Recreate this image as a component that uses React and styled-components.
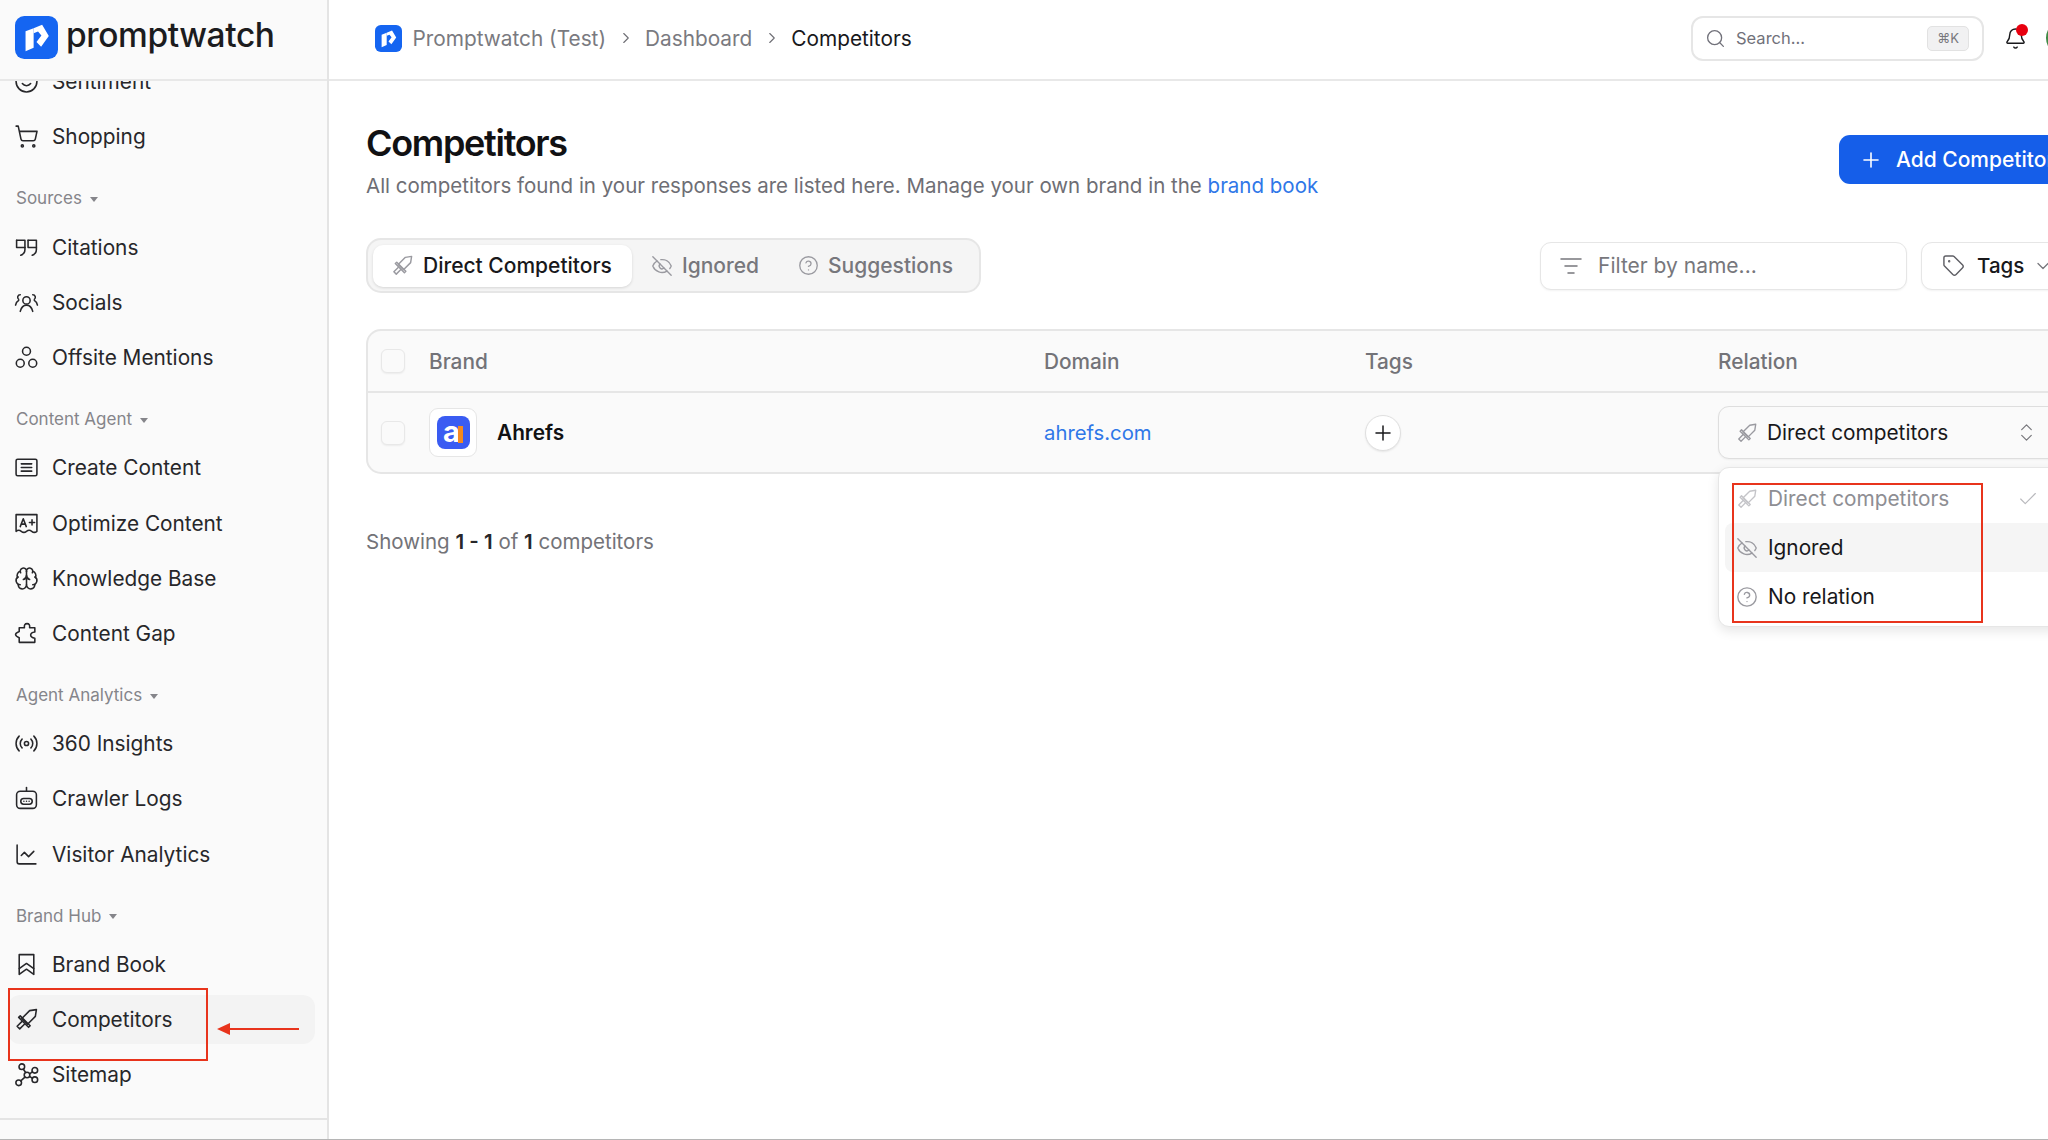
import React from "react";
import styled, { createGlobalStyle } from "styled-components";
import {
  Bell,
  Brain,
  ChartLine,
  Check,
  ChevronDown,
  ChevronRight,
  ChevronsUpDown,
  CircleHelp,
  EyeOff,
  ListFilter,
  Plus,
  Radio,
  Search,
  ShoppingCart,
  Smile,
  Tag,
} from "lucide-react";

const GlobalStyle = createGlobalStyle`
  html, body {
    margin: 0;
    padding: 0;
    background: #fff;
  }
  body {
    font-family: Inter, "Liberation Sans", sans-serif;
    color: #18181b;
    overflow: hidden;
  }
  * {
    box-sizing: border-box;
  }
`;

const Shell = styled.div`
  display: flex;
  width: 2048px;
  height: 1140px;
  overflow: hidden;
  border-bottom: 1px solid #b5b5b5;
`;

/* sidebar */
const Sidebar = styled.aside`
  flex: none;
  display: flex;
  flex-direction: column;
  width: 329px;
  background: #fafafa;
  border-right: 2px solid #e4e4e4;
`;
const BrandBar = styled.div`
  position: relative;
  z-index: 2;
  flex: none;
  display: flex;
  align-items: center;
  gap: 8px;
  height: 81px;
  padding: 0 0 5px 15px;
  background: #fafafa;
  border-bottom: 2px solid #e8e8e8;
`;
const Wordmark = styled.span`
  font-size: 33.5px;
  font-weight: 500;
  letter-spacing: -0.4px;
  color: #1c1c1e;
  position: relative;
  top: -2px;
`;
const NavClip = styled.div`
  flex: 1;
  overflow: hidden;
`;
const Nav = styled.nav`
  margin-top: -24px;
  padding: 0 12px 0 8px;
`;
const NavRow = styled.a`
  position: relative;
  display: flex;
  align-items: center;
  gap: 13px;
  height: 49px;
  margin-bottom: 6.2px;
  padding-left: 6px;
  border-radius: 12px;
  font-size: 20.8px;
  color: #27272a;
  background: ${(p) => (p.$active ? "#f3f3f3" : "transparent")};
  > svg:first-child {
    flex: none;
    width: 25px;
    height: 25px;
    stroke-width: 1.5;
  }
`;
const NavLabel = styled.div`
  display: flex;
  align-items: center;
  gap: 8px;
  height: 24px;
  margin: 25.2px 0 12.2px 8px;
  font-size: 17px;
  color: #85858a;
  &::after {
    content: "";
    border-left: 4.5px solid transparent;
    border-right: 4.5px solid transparent;
    border-top: 5px solid #85858a;
    margin-top: 2px;
  }
`;
const SideFoot = styled.div`
  flex: none;
  height: 21px;
  border-top: 2px solid #e4e4e4;
`;
const MarkBox = styled.div`
  position: absolute;
  left: ${(p) => p.$left}px;
  top: ${(p) => p.$top}px;
  width: ${(p) => p.$w}px;
  height: ${(p) => p.$h}px;
  border: 2px solid #e8341c;
  pointer-events: none;
`;
const MarkArrow = styled.svg`
  position: absolute;
  left: 209px;
  top: 27px;
  width: 84px;
  height: 14px;
`;

/* main */
const Main = styled.main`
  flex: none;
  width: 1755px;
`;
const TopBar = styled.header`
  display: flex;
  align-items: center;
  height: 81px;
  padding: 0 2px 3px 46px;
  border-bottom: 2px solid #e8e8e8;
`;
const Crumbs = styled.div`
  display: flex;
  align-items: center;
  gap: 10.5px;
  font-size: 20.8px;
  color: #7a7a80;
  svg {
    color: #6f6f75;
  }
`;
const CrumbCurrent = styled.span`
  color: #18181b;
`;
const TopRight = styled.div`
  display: flex;
  align-items: center;
  margin-left: auto;
`;
const SearchBox = styled.div`
  display: flex;
  align-items: center;
  width: 293px;
  height: 45px;
  padding: 0 13px 0 12px;
  border: 2px solid #e6e6e6;
  border-radius: 12px;
  font-size: 16.5px;
  color: #71717a;
  svg {
    margin-right: 10px;
  }
`;
const Kbd = styled.kbd`
  margin-left: auto;
  display: flex;
  align-items: center;
  justify-content: center;
  width: 42px;
  height: 25px;
  background: #f1f1f2;
  border: 1px solid #e2e2e2;
  border-radius: 5px;
  font-family: Inter, "DejaVu Sans", sans-serif;
  font-size: 13px;
  color: #77777c;
`;
const BellWrap = styled.div`
  position: relative;
  display: flex;
  margin: 0 19px 0 20px;
  svg {
    width: 23px;
    height: 23px;
  }
  &::after {
    content: "";
    position: absolute;
    top: -3px;
    right: -1px;
    width: 12px;
    height: 12px;
    border-radius: 50%;
    background: #e8000f;
  }
`;
const Avatar = styled.div`
  width: 36px;
  height: 36px;
  border-radius: 50%;
  background: #eef5ee;
  border: 2px solid #3f8a45;
`;
const Content = styled.div`
  padding: 40px 0 0 37px;
`;
const TitleRow = styled.div`
  display: flex;
  align-items: flex-start;
  justify-content: space-between;
  margin-bottom: 37px;
`;
const Title = styled.h1`
  margin: 0 0 6px;
  font-size: 36px;
  line-height: 44px;
  font-weight: 600;
  letter-spacing: -1.3px;
  color: #111113;
`;
const Sub = styled.p`
  margin: 0;
  font-size: 20.5px;
  line-height: 30px;
  color: #6e6e74;
`;
const BlueLink = styled.a`
  color: #2f77e8;
`;
const PrimaryButton = styled.button`
  display: flex;
  align-items: center;
  gap: 13px;
  width: 245px;
  height: 49px;
  margin-top: 14px;
  padding: 0 0 0 20px;
  border: 0;
  border-radius: 11px;
  background: #155ee9;
  color: #fff;
  font-family: inherit;
  font-size: 21px;
  font-weight: 500;
`;
const Toolbar = styled.div`
  display: flex;
  align-items: center;
  margin-bottom: 36px;
`;
const Tabs = styled.div`
  display: flex;
  align-items: center;
  width: 615px;
  height: 55px;
  padding: 0 5px;
  background: #f5f5f5;
  border: 2px solid #e6e6e6;
  border-radius: 15px;
`;
const TabItem = styled.div`
  display: flex;
  align-items: center;
  gap: 9px;
  height: 42px;
  padding: ${(p) => p.$pad};
  border-radius: 10px;
  font-size: 21px;
  font-weight: 500;
  color: ${(p) => (p.$active ? "#18181b" : "#77777c")};
  background: ${(p) => (p.$active ? "#fff" : "transparent")};
  box-shadow: ${(p) => (p.$active ? "0 1px 3px rgba(0,0,0,.13)" : "none")};
  svg {
    color: #9a9aa0;
  }
`;
const FilterBox = styled.div`
  display: flex;
  align-items: center;
  gap: 15px;
  width: 367px;
  height: 48px;
  margin-left: auto;
  padding: 0 18px;
  background: #fff;
  border: 1.5px solid #e6e6e6;
  border-radius: 11px;
  box-shadow: 0 1px 2px rgba(0,0,0,.05);
  font-size: 21px;
  color: #77777c;
`;
const TagsButton = styled.div`
  display: flex;
  align-items: center;
  gap: 12px;
  width: 163px;
  height: 48px;
  margin-left: 14px;
  padding: 0 20px;
  background: #fff;
  border: 1.5px solid #e6e6e6;
  border-radius: 11px;
  box-shadow: 0 1px 2px rgba(0,0,0,.05);
  font-size: 20.5px;
  font-weight: 500;
  color: #18181b;
  > svg:first-child {
    color: #5f5f65;
  }
  > svg:last-child {
    flex: none;
    margin-left: -3px;
    color: #77777c;
  }
`;
const Table = styled.div`
  background: #fafafa;
  border: 2px solid #e6e6e6;
  border-radius: 15px;
`;
const GridRow = styled.div`
  display: grid;
  grid-template-columns: 48px 615px 321px 353px 1fr;
  align-items: center;
  height: ${(p) => p.$h}px;
  padding-left: 13px;
  border-bottom: ${(p) => (p.$head ? "2px solid #e6e6e6" : "0")};
`;
const HeadCell = styled.div`
  font-size: 20.8px;
  font-weight: 500;
  color: #737378;
`;
const CheckBox = styled.div`
  width: 24px;
  height: 24px;
  background: #fafafa;
  border: 1.5px solid #e8e8e8;
  border-radius: 6px;
  box-shadow: 0 1px 2px rgba(0,0,0,.06);
`;
const BrandCell = styled.div`
  display: flex;
  align-items: center;
  gap: 20px;
  font-size: 20.8px;
  font-weight: 600;
  color: #111113;
`;
const LogoFrame = styled.div`
  display: flex;
  align-items: center;
  justify-content: center;
  width: 48px;
  height: 49px;
  background: #fff;
  border: 1.5px solid #e6e6e6;
  border-radius: 9px;
`;
const AhrefsMark = styled.div`
  position: relative;
  display: flex;
  justify-content: center;
  align-items: center;
  width: 33px;
  height: 33px;
  padding-right: 3px;
  background: #3a5cf2;
  border-radius: 8px;
  color: #fff;
  font-size: 29px;
  line-height: 1;
  font-weight: 700;
  &::after {
    content: "";
    position: absolute;
    right: 7px;
    top: 10px;
    width: 5px;
    height: 17px;
    background: #f58a1f;
  }
`;
const AhrefsLetter = styled.span`
  position: relative;
  top: -1px;
`;
const DomainLink = styled.a`
  font-size: 20.3px;
  color: #2f77e8;
`;
const RoundAdd = styled.div`
  display: flex;
  align-items: center;
  justify-content: center;
  width: 36px;
  height: 36px;
  background: #fff;
  border: 1.5px solid #e0e0e0;
  border-radius: 50%;
  box-shadow: 0 1px 2px rgba(0,0,0,.08);
`;
const SelectCell = styled.div`
  position: relative;
  width: 345px;
`;
const SelectBox = styled.div`
  display: flex;
  align-items: center;
  gap: 9px;
  height: 53px;
  padding: 0 24px 0 17px;
  background: #fafafa;
  border: 1.5px solid #dedede;
  border-radius: 11px;
  box-shadow: 0 1px 2px rgba(0,0,0,.05);
  font-size: 20.8px;
  color: #18181b;
  > svg:first-child {
    color: #9a9aa0;
  }
`;
const TrailingIcon = styled.span`
  display: flex;
  margin-left: auto;
  color: ${(p) => p.$color};
`;
const Menu = styled.div`
  position: absolute;
  left: 0;
  right: 0;
  top: calc(100% + 8px);
  height: 160px;
  padding: 6px 6px;
  background: #fff;
  border: 1.5px solid #e6e6e6;
  border-radius: 11px;
  box-shadow: 0 4px 12px rgba(0,0,0,.1);
  z-index: 3;
`;
const MenuItem = styled.div`
  display: flex;
  align-items: center;
  gap: 10px;
  height: 49px;
  padding: 0 17px 0 11px;
  border-radius: 8px;
  font-size: 20.8px;
  color: ${(p) => (p.$muted ? "#8e8e93" : "#18181b")};
  background: ${(p) => (p.$hover ? "#f5f5f5" : "transparent")};
  > svg:first-child {
    color: ${(p) => (p.$muted ? "#c4c4c8" : "#9a9aa0")};
  }
`;
const Showing = styled.p`
  margin: 53px 0 0;
  font-size: 20.5px;
  line-height: 30px;
  color: #737378;
  b {
    font-weight: 600;
    color: #27272a;
  }
`;

/* small drawings that lucide has no match for */
const Stroke = ({ children, size = 22, sw = 1.5, ...rest }) => (
  <svg width={size} height={size} viewBox="0 0 24 24" fill="none" stroke="currentColor" strokeWidth={sw} strokeLinecap="round" strokeLinejoin="round" {...rest}>
    {children}
  </svg>
);
const PromptLogo = ({ size }) => (
  <svg width={size} height={size} viewBox="0 0 42 42">
    <rect width="42" height="42" rx="9" fill="#1565f1" />
    <path d="M10.3 15 L18.2 12 V31 L10.3 34.5 Z" fill="#fff" />
    <path d="M18.2 12 L26.5 8.5 L33 19.5 L25.5 30 L21 25.5 L25.8 19 L22.5 15.2 L18.2 16.8 Z" fill="#fff" />
  </svg>
);
const SwordIcon = (p) => (
  <Stroke {...p}>
    <path d="M21.5 2.5 L15 3.5 L7.5 11 L13 16.5 L20.5 9 Z" />
    <path d="M4.5 10 L6 8.5 L15.5 18 L14 19.5 Z" />
    <path d="M7.5 14 L3 18.5 L5.5 21 L10 16.5" />
  </Stroke>
);
const QuoteIcon = (p) => (
  <Stroke {...p}>
    <path d="M2.5 5 h8 v9 q0 4 -4 5.5" />
    <path d="M2.5 5 v7 h8" />
    <path d="M13.5 5 h8 v9 q0 4 -4 5.5" />
    <path d="M13.5 5 v7 h8" />
  </Stroke>
);
const PeopleIcon = (p) => (
  <Stroke {...p}>
    <circle cx="12" cy="10" r="3.5" />
    <path d="M6 20.5 q1.5-6 6-6 t6 6" />
    <path d="M6 4.5 a2.5 2.5 0 0 0-1.5 4.5 M1.5 14.5 q.5-3 3-4.5" />
    <path d="M18 4.5 a2.5 2.5 0 0 1 1.5 4.5 M22.5 14.5 q-.5-3-3-4.5" />
  </Stroke>
);
const CirclesIcon = (p) => (
  <Stroke {...p}>
    <circle cx="12" cy="6" r="3.8" />
    <circle cx="6" cy="17.5" r="3.8" />
    <circle cx="18" cy="17.5" r="3.8" />
  </Stroke>
);
const ArticleIcon = (p) => (
  <Stroke {...p}>
    <rect x="2" y="4" width="20" height="16" rx="1.5" />
    <path d="M7 8.5 h10 M7 12 h10 M7 15.5 h10" />
  </Stroke>
);
const GradeIcon = (p) => (
  <Stroke {...p}>
    <path d="M2 3.5 h20 v16 q-2.5 2-5 0 t-5 0 t-5 0 t-5 0 Z" />
    <path d="M6 15 l2.9-7.5 2.9 7.5 M7.2 12.6 h3.4 M14.8 11 h5 M17.3 8.5 v5" />
  </Stroke>
);
const PuzzleIcon = (p) => (
  <Stroke {...p}>
    <path d="M5 20.5 H20 V16.5 Q16 16 16 13.5 Q16 11 20 10.5 V6.5 H15 Q15.5 2.5 12.5 2.5 Q9.5 2.5 10 6.5 H5 V10 Q1.5 11.5 1.5 13 Q1.5 14.5 5 16 Z" />
  </Stroke>
);
const CrawlerIcon = (p) => (
  <Stroke {...p}>
    <path d="M12 1.5 v3.5" />
    <rect x="2.5" y="5" width="19" height="16.5" rx="3.5" />
    <rect x="6.5" y="12" width="11" height="5.5" rx="2.75" />
    <path d="M9.5 14.7 h.01 M12 14.7 h.01 M14.5 14.7 h.01" />
  </Stroke>
);
const BrandBookIcon = (p) => (
  <Stroke {...p}>
    <path d="M5 2.5 h14 v19 l-7-5 -7 5 Z" />
    <path d="M5 16 l7-5 7 5" />
  </Stroke>
);
const NodesIcon = (p) => (
  <Stroke {...p}>
    <circle cx="7.5" cy="4.5" r="2.7" />
    <circle cx="20" cy="8" r="2.7" />
    <circle cx="20" cy="17" r="2.7" />
    <circle cx="4.5" cy="20" r="2.7" />
    <circle cx="12.5" cy="12.5" r="2.7" />
    <path d="M9 6.9 l2.2 3.2 M15 11.3 l2.6-1.9 M15 13.8 l2.7 1.9 M10.5 14.5 l-4 3.6" />
  </Stroke>
);

const sections = [
  { items: [{ icon: Smile, label: "Sentiment" }, { icon: ShoppingCart, label: "Shopping" }] },
  {
    title: "Sources",
    items: [
      { icon: QuoteIcon, label: "Citations" },
      { icon: PeopleIcon, label: "Socials" },
      { icon: CirclesIcon, label: "Offsite Mentions" },
    ],
  },
  {
    title: "Content Agent",
    items: [
      { icon: ArticleIcon, label: "Create Content" },
      { icon: GradeIcon, label: "Optimize Content" },
      { icon: Brain, label: "Knowledge Base" },
      { icon: PuzzleIcon, label: "Content Gap" },
    ],
  },
  {
    title: "Agent Analytics",
    items: [
      { icon: Radio, label: "360 Insights" },
      { icon: CrawlerIcon, label: "Crawler Logs" },
      { icon: ChartLine, label: "Visitor Analytics" },
    ],
  },
  {
    title: "Brand Hub",
    items: [
      { icon: BrandBookIcon, label: "Brand Book" },
      { icon: SwordIcon, label: "Competitors", active: true },
      { icon: NodesIcon, label: "Sitemap" },
    ],
  },
];

const App = () => {
  return (
    <>
      <GlobalStyle />
      <Shell>
        <Sidebar>
          <BrandBar>
            <PromptLogo size={43} />
            <Wordmark>promptwatch</Wordmark>
          </BrandBar>
          <NavClip>
            <Nav>
              {sections.map((section, i) => (
                <div key={i}>
                  {section.title && <NavLabel>{section.title}</NavLabel>}
                  {section.items.map(({ icon: Icon, label, active }) => (
                    <NavRow key={label} $active={active}>
                      <Icon />
                      {label}
                      {active && (
                        <>
                          <MarkBox $left={0} $top={-7} $w={200} $h={73} />
                          <MarkArrow viewBox="0 0 84 14">
                            <path d="M0 7 L13 1 V6 H82 V8 H13 V13 Z" fill="#e8341c" />
                          </MarkArrow>
                        </>
                      )}
                    </NavRow>
                  ))}
                </div>
              ))}
            </Nav>
          </NavClip>
          <SideFoot />
        </Sidebar>

        <Main>
          <TopBar>
            <Crumbs>
              <PromptLogo size={27} />
              <span>Promptwatch (Test)</span>
              <ChevronRight size={18} strokeWidth={1.5} />
              <span>Dashboard</span>
              <ChevronRight size={18} strokeWidth={1.5} />
              <CrumbCurrent>Competitors</CrumbCurrent>
            </Crumbs>
            <TopRight>
              <SearchBox>
                <Search size={21} strokeWidth={1.5} />
                Search...
                <Kbd>⌘K</Kbd>
              </SearchBox>
              <BellWrap>
                <Bell strokeWidth={1.5} />
              </BellWrap>
              <Avatar />
            </TopRight>
          </TopBar>

          <Content>
            <TitleRow>
              <div>
                <Title>Competitors</Title>
                <Sub>
                  All competitors found in your responses are listed here. Manage your own brand in the{" "}
                  <BlueLink>brand book</BlueLink>
                </Sub>
              </div>
              <PrimaryButton>
                <Plus size={24} strokeWidth={1.6} />
                Add Competitors
              </PrimaryButton>
            </TitleRow>

            <Toolbar>
              <Tabs>
                <TabItem $active $pad="0 20px 0 18px">
                  <SwordIcon size={23} />
                  Direct Competitors
                </TabItem>
                <TabItem $pad="0 21px 0 19px">
                  <EyeOff size={22} strokeWidth={1.5} />
                  Ignored
                </TabItem>
                <TabItem $pad="0 20px 0 18px">
                  <CircleHelp size={21} strokeWidth={1.5} />
                  Suggestions
                </TabItem>
              </Tabs>
              <FilterBox>
                <ListFilter size={24} strokeWidth={1.5} />
                Filter by name...
              </FilterBox>
              <TagsButton>
                <Tag size={23} strokeWidth={1.5} />
                Tags
                <ChevronDown size={20} strokeWidth={1.5} />
              </TagsButton>
            </Toolbar>

            <Table>
              <GridRow $head $h={62}>
                <CheckBox />
                <HeadCell>Brand</HeadCell>
                <HeadCell>Domain</HeadCell>
                <HeadCell>Tags</HeadCell>
                <HeadCell>Relation</HeadCell>
              </GridRow>
              <GridRow $h={79}>
                <CheckBox />
                <BrandCell>
                  <LogoFrame>
                    <AhrefsMark>
                      <AhrefsLetter>a</AhrefsLetter>
                    </AhrefsMark>
                  </LogoFrame>
                  Ahrefs
                </BrandCell>
                <DomainLink>ahrefs.com</DomainLink>
                <RoundAdd>
                  <Plus size={24} strokeWidth={1.5} />
                </RoundAdd>
                <SelectCell>
                  <SelectBox>
                    <SwordIcon size={22} />
                    Direct competitors
                    <TrailingIcon $color="#77777c">
                      <ChevronsUpDown size={23} strokeWidth={1.25} />
                    </TrailingIcon>
                  </SelectBox>
                  <Menu>
                    <MarkBox $left={13} $top={15} $w={251} $h={140} />
                    <MenuItem $muted>
                      <SwordIcon size={22} />
                      Direct competitors
                      <TrailingIcon $color="#b9b9bd">
                        <Check size={22} strokeWidth={1.25} />
                      </TrailingIcon>
                    </MenuItem>
                    <MenuItem $hover>
                      <EyeOff size={22} strokeWidth={1.5} />
                      Ignored
                    </MenuItem>
                    <MenuItem>
                      <CircleHelp size={22} strokeWidth={1.5} />
                      No relation
                    </MenuItem>
                  </Menu>
                </SelectCell>
              </GridRow>
            </Table>

            <Showing>
              Showing <b>1 - 1</b> of <b>1</b> competitors
            </Showing>
          </Content>
        </Main>
      </Shell>
    </>
  );
};

export default App;
